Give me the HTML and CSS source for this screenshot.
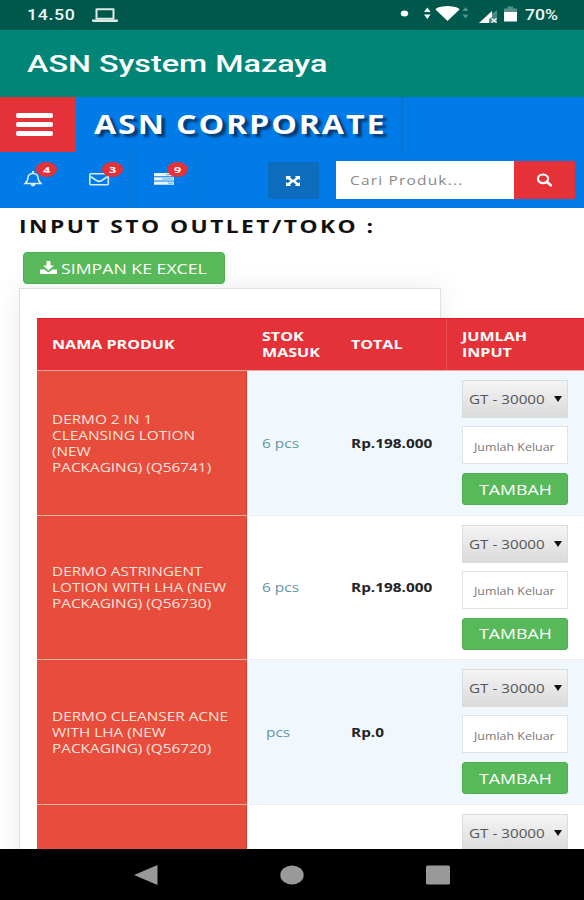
FILE: index.html
```html
<!DOCTYPE html>
<html lang="id">
<head>
<meta charset="utf-8">
<title>ASN System Mazaya</title>
<link rel="stylesheet" href="styles.css">
</head>
<body>
<div class="phone">
  <div class="status">
    <span class="t clock">14.50</span>
    <svg class="laptop" width="26" height="15" viewBox="0 0 26 15"><path d="M4.500 1.200h17v9.600h-17z" fill="none" stroke="#dcebe8" stroke-width="2" stroke-linejoin="round"/><path d="M0 11.500h26v1q0 1.500-1.500 1.500h-23Q0 14 0 12.500z" fill="#dcebe8"/></svg>
    <svg class="signals" width="120" height="20" viewBox="0 0 120 20" fill="#fff"><ellipse cx="5.500" cy="9.500" rx="3.700" ry="2.900"/><path d="M25 8l3.300-4.500L31.600 8zM25 10.500h6.600l-3.300 4.500z"/><path d="M36.500 5.500Q37 2.500 48.500 2Q60 2.500 60.500 5.500L48.500 17z"/><path d="M63.500 7l3-4 3 4zM63.500 10.500h6l-3 4z" opacity=".35"/><path d="M80 19L98 6v13z" opacity=".3"/><path d="M80 19l13-12v6l-3 2v4z"/><path d="M92.500 14.500l5 4M97.500 14.500l-5 4" stroke="#fff" stroke-width="1.300"/><path d="M105 4.500h3.500v-2h5.500v2h4v4h-13z" opacity=".35"/><path d="M105 8h13v9.500h-13z"/></svg>
    <span class="t battery">70%</span>
  </div>
  <div class="appbar"><span class="t app-title">ASN System Mazaya</span></div>
  <header class="site">
    <div class="brand-row">
      <div class="menu"><i></i><i></i><i></i></div>
      <div class="brand"><span class="t brand-name">ASN CORPORATE</span></div>
    </div>
    <div class="tools">
      <div class="tool"><svg width="20" height="16" viewBox="0 0 20 16"><path d="M2 12.500Q5 10 5 6.500Q5.500 2.500 10 2.500Q14.500 2.500 15 6.500Q15 10 18 12.500z" fill="none" stroke="#d8ecfc" stroke-width="1.500"/><path d="M9 0h2v2.500H9zM7.500 13h5q-.5 2.500-2.500 2.500t-2.500-2.500z" fill="#d8ecfc"/></svg><span class="badge"><b>4</b></span></div>
      <div class="tool"><svg width="22" height="16" viewBox="0 0 22 16" fill="none" stroke="#d8ecfc" stroke-width="1.600"><rect x="0.800" y="2.800" width="18.500" height="11" rx="1"/><path d="M1.500 5.500l6 4q2.600 1.700 5.200 0l6-4"/></svg><span class="badge"><b>3</b></span></div>
      <div class="tool"><svg width="22" height="16" viewBox="0 0 22 16"><path d="M0 2h20v3.200H0zM0 6.300h20v3.200H0zM0 10.600h20v3.200H0z" fill="#e7f5ff"/><path d="M12 3.600h7M8 7.900h11M14 12.200h5" stroke="#80b5dd" stroke-width="1.200"/></svg><span class="badge"><b>9</b></span></div>
      <div class="expand-cell"><div class="expand"><svg width="14" height="12" viewBox="0 0 14 12"><path d="M0 1h5L4 2.500 7 5l3-2.500L9 1h5v4l-1.500-1L9.500 6l3 2.200L14 7v4H9l1-1.500L7 7l-3 2.500L5 11H0V7l1.500 1.200L4.500 6l-3-2L0 5z" fill="#fff"/></svg></div></div>
      <div class="search">
        <div class="field"><span class="t placeholder">Cari Produk...</span></div>
        <div class="go"><svg width="17" height="14" viewBox="0 0 17 14" fill="none" stroke="#fff"><ellipse cx="7" cy="5.800" rx="5.100" ry="4.300" stroke-width="2.200"/><path d="M10.800 9l4 3.300" stroke-width="2.700" stroke-linecap="round"/></svg></div>
      </div>
    </div>
  </header>
  <main>
    <h1><span class="t heading">INPUT STO OUTLET/TOKO :</span></h1>
    <div class="export"><svg width="17" height="14" viewBox="0 0 17 14" fill="#fff"><path d="M6.500 0h4v4.500H14l-5.500 5L3 4.500h3.500z"/><path d="M0 8.500h4.500l4 3 4-3H17V13H0z"/></svg><span class="t export-label">SIMPAN KE EXCEL</span></div>
    <section class="panel">
      <div class="grid">
        <div class="row head">
          <div><span class="t th">NAMA PRODUK</span></div>
          <div><span class="t th">STOK<br>MASUK</span></div>
          <div><span class="t th">TOTAL</span></div>
          <div><span class="t th">JUMLAH<br>INPUT</span></div>
        </div>
        <div class="row odd">
          <div class="name"><span class="t">DERMO 2 IN 1<br>CLEANSING LOTION<br>(NEW<br>PACKAGING) (Q56741)</span></div>
          <div class="qty"><span class="t">6 pcs</span></div>
          <div class="total"><span class="t">Rp.198.000</span></div>
          <div class="form"><div class="select"><span class="t">GT - 30000</span><i></i></div><div class="input"><span class="t">Jumlah Keluar</span></div><div class="add"><span class="t">TAMBAH</span></div></div>
        </div>
        <div class="row">
          <div class="name"><span class="t">DERMO ASTRINGENT<br>LOTION WITH LHA (NEW<br>PACKAGING) (Q56730)</span></div>
          <div class="qty"><span class="t">6 pcs</span></div>
          <div class="total"><span class="t">Rp.198.000</span></div>
          <div class="form"><div class="select"><span class="t">GT - 30000</span><i></i></div><div class="input"><span class="t">Jumlah Keluar</span></div><div class="add"><span class="t">TAMBAH</span></div></div>
        </div>
        <div class="row odd">
          <div class="name"><span class="t">DERMO CLEANSER ACNE<br>WITH LHA (NEW<br>PACKAGING) (Q56720)</span></div>
          <div class="qty none"><span class="t">pcs</span></div>
          <div class="total"><span class="t">Rp.0</span></div>
          <div class="form"><div class="select"><span class="t">GT - 30000</span><i></i></div><div class="input"><span class="t">Jumlah Keluar</span></div><div class="add"><span class="t">TAMBAH</span></div></div>
        </div>
        <div class="row last">
          <div class="name"></div>
          <div></div>
          <div></div>
          <div class="form"><div class="select"><span class="t">GT - 30000</span><i></i></div></div>
        </div>
      </div>
    </section>
  </main>
  <nav class="keys">
    <svg width="24" height="20" viewBox="0 0 24 20"><path d="M0 10L23.500 0v20z" fill="#999"/></svg>
    <svg width="24" height="20" viewBox="0 0 24 20"><ellipse cx="12" cy="10" rx="11.700" ry="9.500" fill="#999"/></svg>
    <svg width="24" height="20" viewBox="0 0 24 20"><rect x="0" y=".5" width="24" height="19" rx="1.500" fill="#999"/></svg>
  </nav>
</div>
</body>
</html>
```
FILE: styles.css
```css
* { box-sizing: border-box; }
body { margin: 0; font-family: "Open Sans", sans-serif; }
.phone { width: 584px; height: 900px; display: flex; flex-direction: column; overflow: hidden; background: #fff; }
svg { display: block; flex: none; }
/* wide lettering: every label is stretched horizontally from its left edge */
.t { display: inline-block; white-space: nowrap; transform: scaleX(1.22); transform-origin: 0 50%; flex: none; }

.status { height: 30px; flex: none; background: #00574b; display: flex; align-items: center; color: #eef8f6; font: 500 14px/20px Roboto, sans-serif; }
.clock { width: 38px; margin-left: 27px; letter-spacing: .5px; transform: scaleX(1.270); }
.laptop { margin-left: 27px; }
.signals { margin: -2px 0 0 281px; }
.battery { margin-left: 6px; transform: scaleX(1.260); }
.appbar { height: 67px; flex: none; background: #008577; display: flex; align-items: center; padding: 2px 0 0 26.500px; color: #fff; font: 500 23px/30px Roboto, sans-serif; }
.app-title { transform: scaleX(1.405); }

.site { height: 111px; flex: none; background: #007be8; }
.brand-row { height: 55px; display: flex; }
.menu { width: 76px; background: #e53238; padding: 16px 0 0 16px; display: flex; flex-direction: column; gap: 4.500px; }
.menu i { width: 37px; height: 4.500px; border-radius: 2px; background: #fff; }
.brand { width: 327px; height: 55px; display: flex; align-items: center; padding: 0 0 2px 17.500px; border-right: 1px solid #0870cc; }
.brand-name { color: #fff; font-size: 26px; font-weight: 700; letter-spacing: 1.500px; text-shadow: 3px 3px 2px #053a70; transform: scaleX(1.240); }
.tools { height: 56px; display: flex; }
.tool { position: relative; width: 65.500px; border-right: 1px solid #0875d7; padding: 19px 0 0 23px; }
.badge { position: absolute; left: 36px; top: 10px; width: 21px; height: 15px; border-radius: 50%; background: #e53238; color: #fff; font-size: 9px; line-height: 15px; text-align: center; }
.badge b { display: block; transform: scaleX(1.400); }
.expand-cell { width: 131px; padding: 10px 0 0 71px; border-right: 1px solid #0875d7; }
.expand { width: 51px; height: 37px; background: #0c6cbd; display: flex; align-items: center; justify-content: center; }
.search { width: 239px; height: 38px; margin: 9px 0 0 8.500px; display: flex; }
.field { width: 177.500px; background: #fff; color: #888; font-size: 13px; display: flex; align-items: center; padding-left: 14px; }
.placeholder { letter-spacing: 1px; transform: scaleX(1.190); }
.go { width: 61px; background: #e53238; display: flex; align-items: center; justify-content: center; }

main { height: 641px; flex: none; overflow: hidden; }
h1 { margin: 0; height: 44px; padding: 4px 0 0 19px; font-size: 18.500px; line-height: 28px; color: #111; font-weight: 700; }
.heading { letter-spacing: 2px; transform: scaleX(1.230); }
.export { position: relative; z-index: 1; width: 202px; height: 32px; margin-left: 23px; padding-left: 16px; border-radius: 4px; background: #57b959; border: 1px solid #4fae51; display: flex; align-items: center; gap: 4px; color: #fff; font-size: 14.500px; }
.panel { width: 422px; height: 640px; margin: 4px 0 0 19px; padding: 29px 0 0 17px; border: 1px solid #e2e2e2; box-shadow: 0 0 28px rgba(0,0,0,.08); background: #fff; }
.grid { width: 560px; }
.row { display: grid; grid-template-columns: 210px 89px 110px 151px; height: 144.600px; border-bottom: 1px solid #ebeff1; background: #fff; }
.row > div { display: flex; align-items: center; padding-left: 15px; }
.row.odd { background: #f1f8fd; }
.row.head { height: 53px; background: #e53238; color: #fff; font-weight: 700; font-size: 13px; line-height: 16px; border-top: 1px solid #d91c22; border-bottom: 1px solid #f7a6a8; }
.row.head > div { padding-bottom: 2px; }
.row.head > div:last-child { border-left: 1px solid #ea4b50; }
.th { transform: scaleX(1.235); }
.row > .name { background: #e74c3c; color: #fce3da; font-size: 13px; line-height: 16px; box-shadow: 0 1px #f5b3a6; border-right: 1px solid #df3a22; }
.name .t { transform: scaleX(1.180); }
.qty { color: #6295a8; font-size: 13px; }
.qty .t { transform: scaleX(1.190); }
.row > .none { padding-left: 19px; }
.total { color: #222; font-size: 13px; font-weight: 700; }
.total .t { transform: scaleX(1.180); }
.row > .form { flex-direction: column; align-items: flex-start; padding: 9px 0 0 16px; }
.select, .input, .add { width: 106px; display: flex; align-items: center; flex: none; }
.select { height: 38px; padding: 0 5px 0 6px; justify-content: space-between; border: 1px solid #d9dcdd; background: linear-gradient(#f5f5f5, #dadada); color: #555; font-size: 13px; }
.select .t { transform: scaleX(1.170); }
.select i { border: 4px solid transparent; border-top: 6px solid #111; border-bottom: 0; }
.input { height: 38px; margin-top: 8px; padding: 2px 0 0 11px; border: 1px solid #dfe3e5; background: #fff; color: #777; font-size: 11px; }
.input .t { transform: scaleX(1.130); }
.add { height: 32px; margin-top: 9px; padding-left: 16px; border-radius: 3px; background: #57b959; border: 1px solid #4fae51; color: #fff; font-size: 14px; }
.add .t { transform: scaleX(1.270); }

.keys { height: 51px; flex: none; background: #000; display: flex; justify-content: center; align-items: center; gap: 122px; }
```
